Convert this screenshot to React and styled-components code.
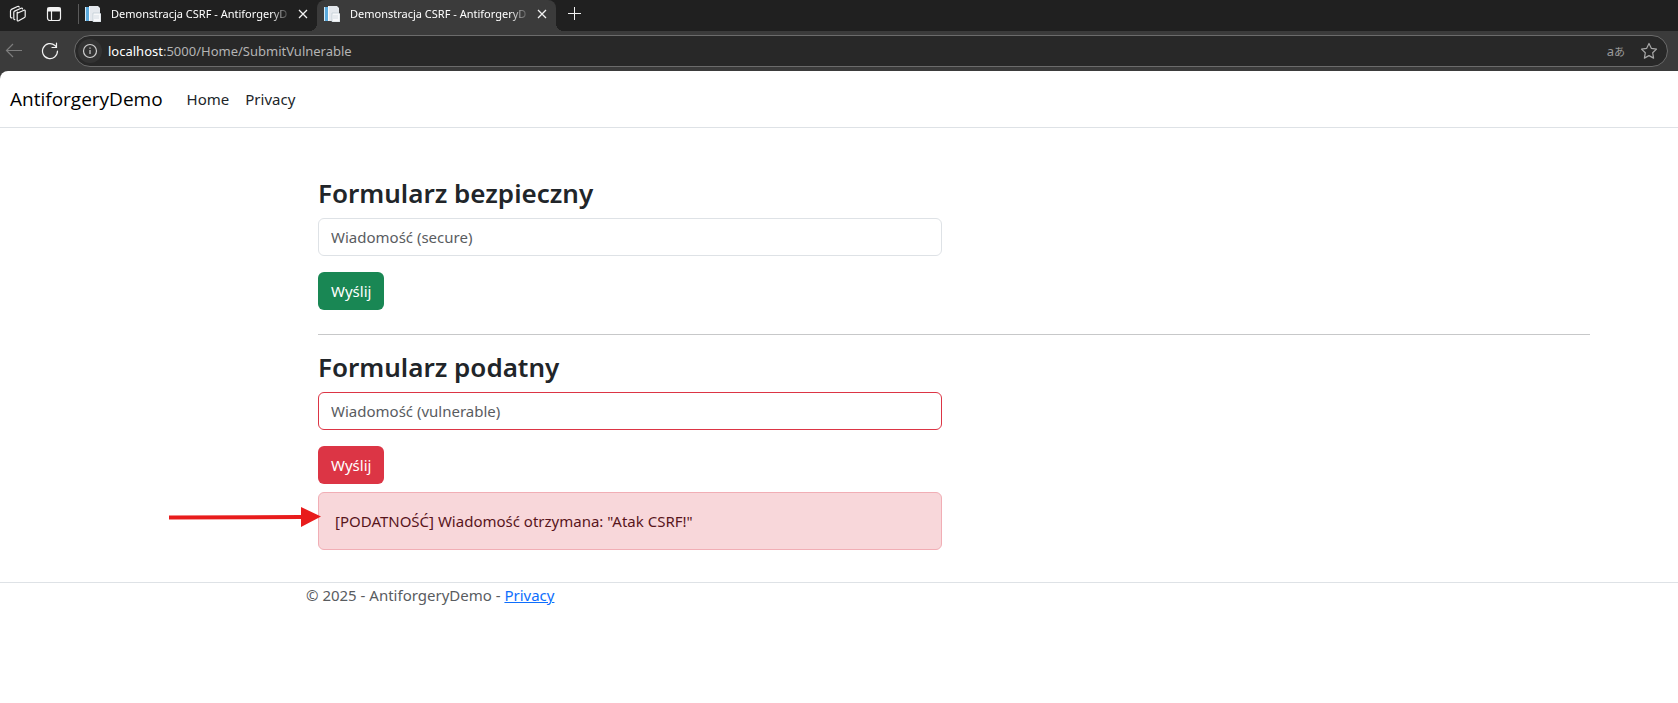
import React from "react";
import styled, { createGlobalStyle, css } from "styled-components";

const GlobalStyle = createGlobalStyle`
  *, *::before, *::after { box-sizing: border-box; }
  body {
    margin: 0;
    background: #fff;
    color: #212529;
    font-family: "Noto Sans", "Open Sans", "Noto Sans CJK JP", sans-serif;
    font-size: 15px;
    line-height: 24px;
  }
`;

const TabStrip = styled.div`
  display: flex;
  height: 31px;
  background: #202020;
  overflow: hidden;
`;

const StripTools = styled.div`
  display: flex;
  align-items: center;
  gap: 18px;
  width: 78px;
  padding: 0 0 4px 9px;
`;

const IconButton = styled.button`
  display: flex;
  align-items: center;
  justify-content: center;
  flex: none;
  width: ${(p) => p.$size || 18}px;
  height: ${(p) => p.$size || 18}px;
  padding: 0;
  border: 0;
  border-radius: 50%;
  background: ${(p) => p.$fill || "transparent"};
  color: ${(p) => p.$color || "#f2f2f2"};
`;

const TabShell = styled.div`
  position: relative;
  display: flex;
  align-items: center;
  width: 239px;
  padding: 0 8px 4px 7px;
  color: #fff;
  font-size: 11px;
  line-height: 16px;
  ${(p) =>
    p.$active
      ? css`
          background: #3b3b3b;
          border-radius: 8px 8px 0 0;
          &::before, &::after {
            content: "";
            position: absolute;
            bottom: 0;
            width: 8px;
            height: 8px;
          }
          &::before {
            left: -8px;
            background: radial-gradient(circle at 0 0, #202020 8px, #3b3b3b 8px);
          }
          &::after {
            right: -8px;
            background: radial-gradient(circle at 100% 0, #202020 8px, #3b3b3b 8px);
          }
        `
      : css`
          &::before {
            content: "";
            position: absolute;
            left: 0;
            top: 4px;
            height: 20px;
            border-left: 1px solid #5a5a5a;
          }
        `}
`;

const TabTitle = styled.span`
  flex: 1;
  margin: 0 6px 0 10px;
  white-space: nowrap;
  mask-image: linear-gradient(to right, #000 calc(100% - 20px), transparent);
`;

const NewTab = styled.div`
  display: flex;
  align-items: center;
  padding: 0 0 5px 9px;
`;

const Toolbar = styled.div`
  display: flex;
  align-items: center;
  height: 40px;
  padding: 0 10px 0 5px;
  gap: 18px;
  background: #3b3b3b;
`;

const AddressBar = styled.div`
  display: flex;
  align-items: center;
  flex: 1;
  height: 32px;
  margin-left: -3px;
  padding: 0 9px 0 3px;
  border: 1px solid #6b6b6b;
  border-radius: 16px;
  background: #282828;
  color: #b4b4b4;
  font-size: 13px;
`;

const Address = styled.span`
  flex: 1;
  margin-left: 6px;
  strong { color: #fff; font-weight: 400; }
`;

const AddressActions = styled.div`
  display: flex;
  align-items: center;
  gap: 15px;
`;

const Page = styled.div`
  background: #fff;
  border-top-left-radius: 8px;
`;

const PageFrame = styled.div`
  background: #3b3b3b;
`;

const Navbar = styled.nav`
  display: flex;
  align-items: center;
  height: 57px;
  padding: 0 10px;
  border-bottom: 1px solid #dee2e6;
`;

const NavLink = styled.a`
  padding: 0 8px;
  color: #212529;
  text-decoration: none;
`;

const Brand = styled.a`
  margin-right: 16px;
  color: #000;
  font-family: "Open Sans", "Noto Sans", sans-serif;
  font-size: 19px;
  line-height: 30px;
  text-decoration: none;
`;

const Container = styled.div`
  max-width: 1614px;
  padding-left: 306px;
  padding-right: 12px;
`;

const Main = styled.main`
  padding: 49px 12px 32px;
`;

const Section = styled.section`
  width: 50%;
  padding-right: 12px;
`;

const Heading = styled.h2`
  margin: 0 0 8px;
  font-size: 26px;
  font-weight: 600;
  line-height: 33px;
`;

const TextInput = styled.input`
  display: block;
  width: 100%;
  height: 38px;
  margin-bottom: 16px;
  padding: 0 12px;
  border: 1px solid ${(p) => (p.$danger ? "#dc3545" : "#dee2e6")};
  border-radius: 6px;
  font: inherit;
  &::placeholder { color: #595c5f; opacity: 1; }
`;

const SubmitButton = styled.button`
  display: block;
  height: 38px;
  padding: 0 13px;
  border: 0;
  border-radius: 6px;
  background: ${(p) => (p.$danger ? "#dc3545" : "#198754")};
  color: #fff;
  font: inherit;
`;

const Divider = styled.hr`
  margin: 24px 0 16px;
  border: 0;
  border-top: 1px solid #c7c8c9;
`;

const Alert = styled.div`
  position: relative;
  margin-top: 8px;
  padding: 16px;
  border: 1px solid #f1aeb5;
  border-radius: 6px;
  background: #f8d7da;
  color: #58151c;
`;

const Arrow = styled.svg`
  position: absolute;
  right: 100%;
  top: 13px;
  margin-right: -2px;
`;

const Footer = styled.footer`
  border-top: 1px solid #dee2e6;
  color: #595c5f;
  a { color: #0d6efd; }
`;

const WorkspacesIcon = () => (
  <svg width="18" height="18" viewBox="0 0 18 18" fill="none" stroke="currentColor" strokeWidth="1.2" strokeLinejoin="round" strokeLinecap="round">
    <path d="M8.200 8.300 15 5.200q1.200-.3 1.200.8v5.200q0 .8-.7 1.200L9.700 15.800q-1.500.6-1.500-.8zM8.200 8.300Q7.800 7.600 8.600 7.200" />
    <path d="M5.800 14.600q-1 .1-1-1V7.600q0-1 .9-1.500L12 3.200q1.300-.5 1.500.6" />
    <path d="M3 12.800q-1.300.2-1.500-1V5.900q0-1 .9-1.500L8.500 1.500q1.200-.5 1.700.5" />
  </svg>
);

const VerticalTabsIcon = () => (
  <svg width="16" height="16" viewBox="0 0 16 16" fill="none" stroke="currentColor" strokeWidth="1.2">
    <rect x="1.500" y="1.500" width="13" height="13" rx="2.500" />
    <path d="M5.500 5v9.500" />
    <path d="M2 2h12v3H2z" fill="currentColor" />
  </svg>
);

const PageIcon = () => (
  <svg width="16" height="16" viewBox="0 0 16 16">
    <path d="M0 1h4v14H0z" fill="#5aa9dc" />
    <path d="M0 1h1v14H0z" fill="#d6e9f5" />
    <path d="M4 0h9l2 2v13H4z" fill="#e4e8ed" />
    <path d="M4 0h1v15H4z" fill="#f7fafc" />
    <path d="M8 7h7l1 1v8H8z" fill="#f7f8fa" stroke="#b7c2cf" strokeWidth=".6" />
    <path d="M9 10h5M9 12h5" stroke="#d5dce3" />
  </svg>
);

const CloseIcon = () => (
  <svg width="10" height="10" viewBox="0 0 10 10" stroke="currentColor" strokeWidth="1.300">
    <path d="M1 1l8 8M9 1L1 9" />
  </svg>
);

const PlusIcon = () => (
  <svg width="14" height="14" viewBox="0 0 14 14" stroke="currentColor" strokeWidth="1">
    <path d="M7.500 1v13M1 7.500h13" />
  </svg>
);

const BackIcon = () => (
  <svg width="18" height="16" viewBox="0 0 18 16" fill="none" stroke="currentColor" strokeWidth="1.200">
    <path d="M17 7.500H1.500M8 1 1.500 7.500 8 14" />
  </svg>
);

const ReloadIcon = () => (
  <svg width="18" height="18" viewBox="0 0 18 18" fill="none" stroke="currentColor" strokeWidth="1.200" strokeLinecap="round">
    <path d="M16.500 9A7.500 7.500 0 1 1 14 3.500L15.500 5M15.500 1v4.500H11" />
  </svg>
);

const InfoIcon = () => (
  <svg width="16" height="16" viewBox="0 0 16 16" fill="none" stroke="currentColor" strokeWidth="1.200">
    <circle cx="8" cy="8" r="6.500" />
    <path d="M8 7v4M8 4.500v1.300" />
  </svg>
);

const StarIcon = () => (
  <svg width="18" height="18" viewBox="0 0 18 18" fill="none" stroke="currentColor" strokeWidth="1.200" strokeLinejoin="round">
    <path d="m9 1.500 2.300 4.800 5.200.8-3.800 3.700.9 5.300L9 13.600l-4.600 2.500.9-5.300L1.500 7.100l5.200-.8z" />
  </svg>
);

const Translate = styled.span`
  color: #9a9a9a;
  font-size: 13px;
  line-height: 16px;
`;

const Kana = styled.span`
  font-size: 11px;
`;

function BrowserTab({ active }) {
  return (
    <TabShell $active={active}>
      <PageIcon />
      <TabTitle>Demonstracja CSRF - AntiforgeryD</TabTitle>
      <IconButton $size={12} aria-label="Close tab"><CloseIcon /></IconButton>
    </TabShell>
  );
}

function MessageForm({ title, placeholder, danger, children }) {
  return (
    <Section>
      <Heading>{title}</Heading>
      <form onSubmit={(e) => e.preventDefault()}>
        <TextInput $danger={danger} placeholder={placeholder} aria-label={placeholder} />
        <SubmitButton $danger={danger}>Wyślij</SubmitButton>
      </form>
      {children}
    </Section>
  );
}

export default function App() {
  return (
    <>
      <GlobalStyle />
      <TabStrip>
        <StripTools>
          <IconButton aria-label="Workspaces"><WorkspacesIcon /></IconButton>
          <IconButton aria-label="Tab actions"><VerticalTabsIcon /></IconButton>
        </StripTools>
        <BrowserTab />
        <BrowserTab active />
        <NewTab>
          <IconButton aria-label="New tab"><PlusIcon /></IconButton>
        </NewTab>
      </TabStrip>
      <Toolbar>
        <IconButton $color="#7d7d7d" aria-label="Back"><BackIcon /></IconButton>
        <IconButton aria-label="Reload"><ReloadIcon /></IconButton>
        <AddressBar>
          <IconButton $size={24} $fill="#333333" $color="#d0d0d0" aria-label="Site information"><InfoIcon /></IconButton>
          <Address><strong>localhost</strong>:5000/Home/SubmitVulnerable</Address>
          <AddressActions>
            <Translate>a<Kana>あ</Kana></Translate>
            <IconButton $color="#a8a8a8" aria-label="Add to favorites"><StarIcon /></IconButton>
          </AddressActions>
        </AddressBar>
      </Toolbar>
      <PageFrame>
        <Page>
          <Navbar>
            <Brand href="#">AntiforgeryDemo</Brand>
            <NavLink href="#">Home</NavLink>
            <NavLink href="#">Privacy</NavLink>
          </Navbar>
          <Container>
            <Main>
              <MessageForm title="Formularz bezpieczny" placeholder="Wiadomość (secure)" />
              <Divider />
              <MessageForm title="Formularz podatny" placeholder="Wiadomość (vulnerable)" danger>
                <Alert>
                  <Arrow width="152" height="22" viewBox="0 0 152 22" fill="#e81c1c" aria-hidden="true">
                    <path d="M0 9.500 132 9V1l20 9.500L132 21v-8L0 13.500z" />
                  </Arrow>
                  [PODATNOŚĆ] Wiadomość otrzymana: "Atak CSRF!"
                </Alert>
              </MessageForm>
            </Main>
          </Container>
          <Footer>
            <Container>© 2025 - AntiforgeryDemo - <a href="#">Privacy</a></Container>
          </Footer>
        </Page>
      </PageFrame>
    </>
  );
}
